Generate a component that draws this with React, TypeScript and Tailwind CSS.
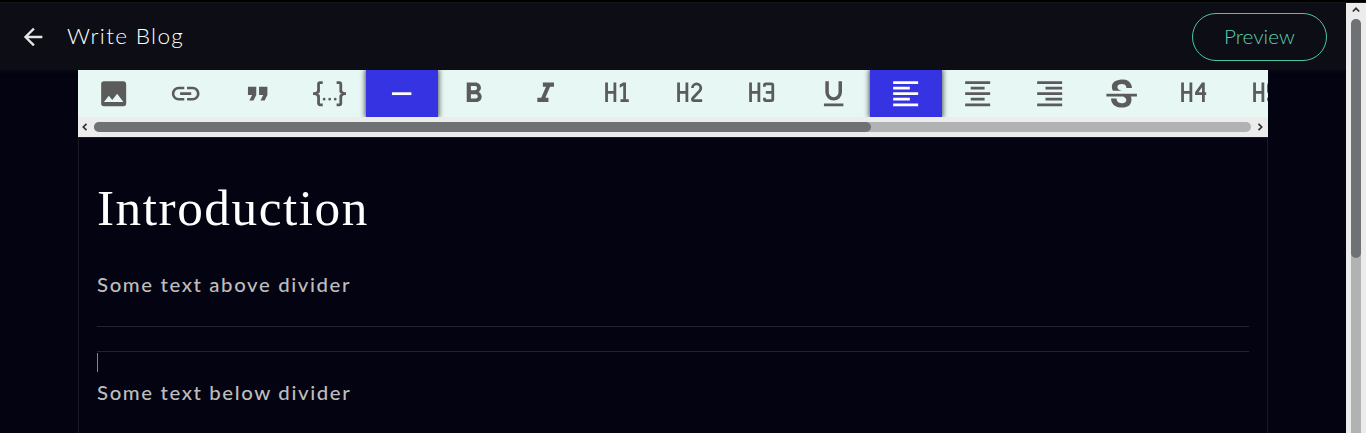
import React from "react";

const H = "M3,4H5V10H9V4H11V18H9V12H5V18H3V4";

type Tool = { label: string; path: string; active?: boolean };

const tools: Tool[] = [
  { label: "Image", path: "M8.5,13.5L11,16.5L14.5,12L19,18H5M21,19V5C21,3.89 20.1,3 19,3H5A2,2 0 0,0 3,5V19A2,2 0 0,0 5,21H19A2,2 0 0,0 21,19Z" },
  { label: "Link", path: "M3.9,12C3.9,10.29 5.29,8.9 7,8.9H11V7H7A5,5 0 0,0 2,12A5,5 0 0,0 7,17H11V15.1H7C5.29,15.1 3.9,13.71 3.9,12M8,13H16V11H8V13M17,7H13V8.9H17C18.71,8.9 20.1,10.29 20.1,12C20.1,13.71 18.71,15.1 17,15.1H13V17H17A5,5 0 0,0 22,12A5,5 0 0,0 17,7Z" },
  { label: "Quote", path: "M14,17H17L19,13V7H13V13H16M6,17H9L11,13V7H5V13H8L6,17Z" },
  { label: "Code", path: "M5,3H7V5H5V10A2,2 0 0,1 3,12A2,2 0 0,1 5,14V19H7V21H5C3.93,20.73 3,20.1 3,19V15A2,2 0 0,0 1,13H0V11H1A2,2 0 0,0 3,9V5A2,2 0 0,1 5,3M19,3A2,2 0 0,1 21,5V9A2,2 0 0,0 23,11H24V13H23A2,2 0 0,0 21,15V19A2,2 0 0,1 19,21H17V19H19V14A2,2 0 0,1 21,12A2,2 0 0,1 19,10V5H17V3H19M12,15A1,1 0 0,1 13,16A1,1 0 0,1 12,17A1,1 0 0,1 11,16A1,1 0 0,1 12,15M8,15A1,1 0 0,1 9,16A1,1 0 0,1 8,17A1,1 0 0,1 7,16A1,1 0 0,1 8,15M16,15A1,1 0 0,1 17,16A1,1 0 0,1 16,17A1,1 0 0,1 15,16A1,1 0 0,1 16,15Z" },
  { label: "Divider", path: "M19,13H5V11H19V13Z", active: true },
  { label: "Bold", path: "M13.5,15.5H10V12.5H13.5A1.5,1.5 0 0,1 15,14A1.5,1.5 0 0,1 13.5,15.5M10,6.5H13A1.5,1.5 0 0,1 14.5,8A1.5,1.5 0 0,1 13,9.5H10M15.6,10.79C16.57,10.11 17.25,9 17.25,8C17.25,5.74 15.5,4 13.25,4H7V18H14.04C16.14,18 17.75,16.3 17.75,14.21C17.75,12.69 16.89,11.39 15.6,10.79Z" },
  { label: "Italic", path: "M10,4V7H12.21L8.79,15H6V18H14V15H11.79L15.21,7H18V4H10Z" },
  { label: "Heading 1", path: H + "M14,18V16H16V6.31L13.5,7.75V5.44L16,4H18V16H20V18H14Z" },
  { label: "Heading 2", path: H + "M21,18H15A2,2 0 0,1 13,16C13,15.47 13.2,15 13.54,14.64L18.41,9.41C18.78,9.05 19,8.55 19,8A2,2 0 0,0 17,6A2,2 0 0,0 15,8H13A4,4 0 0,1 17,4A4,4 0 0,1 21,8C21,9.1 20.55,10.1 19.83,10.83L15,16H21V18Z" },
  { label: "Heading 3", path: H + "M15,4H19A2,2 0 0,1 21,6V16A2,2 0 0,1 19,18H15A2,2 0 0,1 13,16V15H15V16H19V12H15V10H19V6H15V7H13V6A2,2 0 0,1 15,4Z" },
  { label: "Underline", path: "M5,21H19V19H5V21M12,17A6,6 0 0,0 18,11V3H15.5V11A3.5,3.5 0 0,1 12,14.5A3.5,3.5 0 0,1 8.5,11V3H6V11A6,6 0 0,0 12,17Z" },
  { label: "Align left", path: "M3,3H21V5H3V3M3,7H15V9H3V7M3,11H21V13H3V11M3,15H15V17H3V15M3,19H21V21H3V19Z", active: true },
  { label: "Align center", path: "M3,3H21V5H3V3M7,7H17V9H7V7M3,11H21V13H3V11M7,15H17V17H7V15M3,19H21V21H3V19Z" },
  { label: "Align right", path: "M3,3H21V5H3V3M9,7H21V9H9V7M3,11H21V13H3V11M9,15H21V17H9V15M3,19H21V21H3V19Z" },
  { label: "Strikethrough", path: "M23,12V14H18.61C19.61,16.14 19.56,22 12.38,22C4.05,22.05 4.37,15.5 4.37,15.5L8.34,15.55C8.37,18.92 11.5,18.92 12.12,18.88C12.76,18.83 15.15,18.84 15.34,16.5C15.42,15.41 14.32,14.58 13.12,14H1V12H23M19.41,7.89L15.43,7.86C15.43,7.86 15.6,5.09 12.15,5.08C8.7,5.06 9,7.28 9,7.56C9.04,7.84 9.34,9.22 12,9.88H5.71C5.71,9.88 2.22,3.15 10.74,2C19.45,0.8 19.43,7.91 19.41,7.89Z" },
  { label: "Heading 4", path: H + "M18,18V13H13V11L18,4H20V11H21V13H20V18H18M18,11V7.42L15.45,11H18Z" },
  { label: "Heading 5", path: H + "M15,4H20V6H15V10H17A4,4 0 0,1 21,14A4,4 0 0,1 17,18H15A2,2 0 0,1 13,16V15H15V16H17A2,2 0 0,0 19,14A2,2 0 0,0 17,12H15A2,2 0 0,1 13,10V6A2,2 0 0,1 15,4Z" },
];

function Chevron({ d }: { d: string }) {
  return (
    <svg viewBox="0 0 8 8" className="size-2 shrink-0" fill="none" stroke="#2e3234" strokeWidth="1.7">
      <path d={d} />
    </svg>
  );
}

function Toolbar() {
  return (
    <div>
      <div className="flex h-[47px] overflow-hidden bg-[#e6f7f4]">
        {tools.map((t) => (
          <button
            key={t.label}
            aria-label={t.label}
            className={
              t.active
                ? "flex h-[47px] w-[72px] shrink-0 items-center justify-center bg-[#3633e3] pr-[0.67px] text-white shadow-[0_0_5px_1px_rgba(0,0,0,0.65)]"
                : "flex h-[47px] w-[72px] shrink-0 items-center justify-center pr-[0.67px] text-[#5b5b5b]"
            }
          >
            <svg viewBox="0 0 24 24" className="size-[33.33px]" fill="currentColor">
              <path d={t.path} />
            </svg>
          </button>
        ))}
      </div>
      <div className="flex h-5 items-center bg-[#ececec] px-[3px]">
        <Chevron d="M5.5 0.8 L2.3 4 L5.5 7.2" />
        <div className="mr-[5px] ml-[5px] h-2.5 w-[1157px] rounded-full bg-[#b1b2b3]">
          <div className="h-2.5 w-[777px] rounded-full bg-[#6e7275]" />
        </div>
        <Chevron d="M2.5 0.8 L5.7 4 L2.5 7.2" />
      </div>
    </div>
  );
}

export default function App() {
  return (
    <div className="flex h-[433px] flex-col overflow-hidden bg-[#040311] font-['Lato',sans-serif]">
      <div className="h-[3px] shrink-0 border-b border-[#191919] bg-black" />
      <div className="flex min-h-0 flex-1">
        <div className="flex min-w-0 flex-1 flex-col">
          <header className="flex h-[67px] shrink-0 items-center bg-[#0c0d15] pr-[19px] pl-[19px] shadow-[0_1px_4px_#0c0d15]">
            <svg viewBox="0 0 24 24" className="size-7 text-[#e4e4e4]" fill="currentColor">
              <path d="M20,11V13H8L13.5,18.5L12.08,19.92L4.16,12L12.08,4.08L13.5,5.5L8,11H20Z" />
            </svg>
            <h1 className="mb-[2px] ml-5 origin-left scale-x-[1.027] text-[22px] leading-8 font-light tracking-[1.3px] text-white">
              Write Blog
            </h1>
            <button className="ml-auto h-12 w-[135px] rounded-full border border-[#4fc4a7] pt-px text-[19px] font-light text-[#5cd0b3]">
              <span className="inline-block scale-x-[1.09]">Preview</span>
            </button>
          </header>
          <main className="mx-[78px] min-h-0 flex-1">
            <Toolbar />
            <article className="h-[296px] border border-b-0 border-[#1a1927] px-[18px] pt-[38px]">
              <h2 className="h-16 origin-left scale-x-[1.025] font-['Liberation_Serif',serif] text-[50px] leading-[64px] tracking-[1.5px] text-white">
                Introduction
              </h2>
              <p className="mt-[31px] h-7 w-fit origin-left scale-x-[1.073] text-[19px] leading-7 font-medium tracking-[1.5px] text-[#bdbdbd]">
                Some text above divider
              </p>
              <div className="mt-[27px] h-px bg-[#242234]" />
              <div className="mt-6 h-px bg-[#242234]" />
              <div className="mt-px h-[19px] w-px bg-[#858585]" />
              <p className="mt-[7px] h-7 w-fit origin-left scale-x-[1.073] text-[19px] leading-7 font-medium tracking-[1.5px] text-[#bdbdbd]">
                Some text below divider
              </p>
            </article>
          </main>
        </div>
        <div className="flex w-5 shrink-0 flex-col items-center bg-[#ececec] pt-[3px]">
          <Chevron d="M0.8 5.5 L4 2.3 L7.2 5.5" />
          <div className="mt-[5px] w-2.5 flex-1 rounded-t-full bg-[#b1b2b3]">
            <div className="h-[239px] rounded-full bg-[#6e7275]" />
          </div>
        </div>
      </div>
    </div>
  );
}
